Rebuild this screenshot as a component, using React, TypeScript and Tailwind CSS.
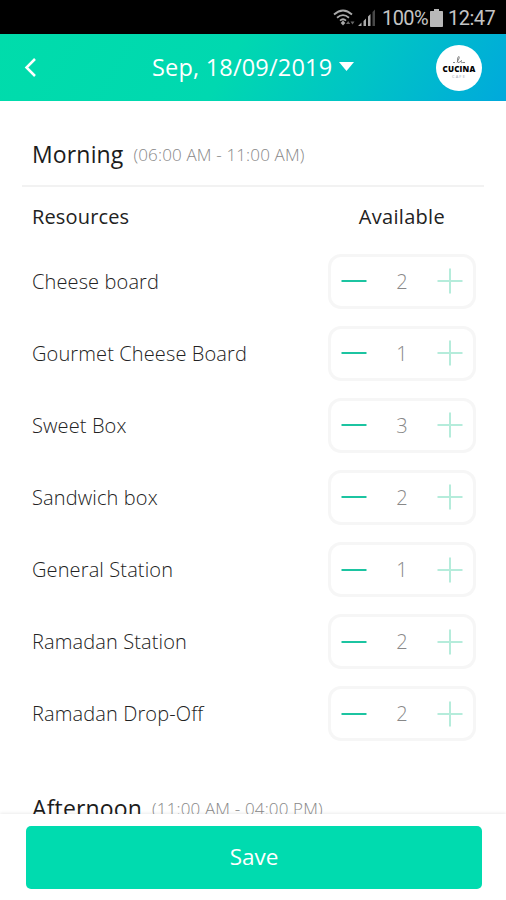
import { useState } from "react";

interface Resource {
  name: string;
  available: number;
}

const INITIAL_RESOURCES: Resource[] = [
  { name: "Cheese board", available: 2 },
  { name: "Gourmet Cheese Board", available: 1 },
  { name: "Sweet Box", available: 3 },
  { name: "Sandwich box", available: 2 },
  { name: "General Station", available: 1 },
  { name: "Ramadan Station", available: 2 },
  { name: "Ramadan Drop-Off", available: 2 },
];

function StatusBar() {
  return (
    <div className="flex h-[34px] shrink-0 items-center justify-end bg-black pr-[11px] pt-[2px] font-['Roboto',sans-serif] text-[20px] leading-none text-[#c4c4c4]">
      <svg className="mr-[3px] h-[18px] w-[22px]" viewBox="0 0 22 18" fill="none" stroke="#aaa" strokeWidth="1.8">
        <path d="M1 5.5Q10 -2.5 19 5.5" />
        <path d="M4 8.7Q10 3.5 16 8.7" />
        <path d="M7 11.6Q10 9 13 11.6" />
        <path d="M10 11.5L12.3 14L10 16.5L7.7 14Z" fill="#aaa" stroke="none" />
        <path d="M13 15L15.2 12L17.2 15ZM17.5 12.5H21.5L19.5 15.5Z" fill="#666" stroke="none" />
      </svg>
      <svg className="mr-[6px] h-[18px] w-[18px]" viewBox="0 0 18 18" fill="#aaa">
        <path d="M0 17L3.5 13.5V17ZM5.5 12L8 9.5V17H5.5ZM10 7.5L12.5 5V17H10Z" />
        <path d="M14.5 3L17 .5V17H14.5Z" fill="#484848" />
      </svg>
      <span className="w-[47px] tracking-[-0.6px]">100%</span>
      <svg className="mr-[5px] ml-px h-[18px] w-[13px]" viewBox="0 0 13 18" fill="#b8b8b8">
        <path d="M4 0H9V2H12C12.6 2 13 2.4 13 3V17C13 17.6 12.6 18 12 18H1C.4 18 0 17.6 0 17V3C0 2.4.4 2 1 2H4Z" />
      </svg>
      <span className="w-[47px] tracking-[-0.5px]">12:47</span>
    </div>
  );
}

function Header() {
  return (
    <header className="flex h-[67px] shrink-0 items-center bg-[linear-gradient(120deg,#00dcab_0%,#00d8b0_45%,#00c4c5_71%,#00a9dc_100%)] pl-[24px] pr-[24px] text-white">
      <button className="flex h-8 w-8 items-center">
        <svg className="h-[20px] w-[13px]" viewBox="0 0 13 20" fill="none" stroke="currentColor" strokeWidth="2.5">
          <path d="M11 1L2.5 9.5L11 18" />
        </svg>
      </button>
      <button className="ml-[96px] flex items-center">
        <span className="w-[187px] whitespace-nowrap text-left text-[23.5px] tracking-[0.2px]">Sep, 18/09/2019</span>
        <svg className="mb-[2px] h-[9px] w-[15px]" viewBox="0 0 15 9" fill="currentColor">
          <path d="M0 0H15L7.5 9Z" />
        </svg>
      </button>
      <div className="ml-auto flex h-[46px] w-[46px] flex-col items-center justify-center rounded-full bg-white text-black">
        <svg className="h-[9px] w-[15px]" viewBox="0 0 15 9" fill="none" stroke="#777" strokeWidth="0.9">
          <path d="M1 7.5H3M5 7.5C6 5 8 3 7 1.5C5.5 1.5 5 6 6 7.5C7 8 9 6 9.5 5.5C8.5 8 10 8 10.5 7.5H13" />
        </svg>
        <span className="text-[8px] leading-[9px] font-extrabold tracking-[0.2px]">CUCINA</span>
        <span className="text-[4px] leading-[7px] tracking-[1.2px] text-gray-400">CAFE</span>
      </div>
    </header>
  );
}

function Stepper({ value, onChange }: { value: number; onChange: (value: number) => void }) {
  return (
    <div className="flex h-[55px] w-[148px] items-center justify-between rounded-[13px] border-[3px] border-[#f6f6f6] px-[10px]">
      <button onClick={() => onChange(Math.max(0, value - 1))}>
        <svg className="h-[26px] w-[26px]" viewBox="0 0 26 26" stroke="#1cc4a1" strokeWidth="2">
          <path d="M.5 13H25.5" />
        </svg>
      </button>
      <span className="pt-px text-[20px] font-light text-[#888]">{value}</span>
      <button onClick={() => onChange(value + 1)}>
        <svg className="h-[26px] w-[26px]" viewBox="0 0 26 26" stroke="#b5ecdb" strokeWidth="2">
          <path d="M.5 13H25.5M13 .5V25.5" />
        </svg>
      </button>
    </div>
  );
}

function SectionTitle({ title, hours }: { title: string; hours: string }) {
  return (
    <div className="flex h-[30px] items-center gap-[10px] whitespace-nowrap pl-[10px]">
      <h2 className="text-[23px] leading-[30px] tracking-[0.15px] text-[#1c1c1c]">{title}</h2>
      <span className="pt-[2px] text-[17px] leading-[30px] font-light tracking-[0.15px] text-[#888]">{hours}</span>
    </div>
  );
}

export default function App() {
  const [resources, setResources] = useState(INITIAL_RESOURCES);

  const setAvailable = (index: number, available: number) => {
    setResources(resources.map((item, i) => (i === index ? { ...item, available } : item)));
  };

  return (
    <div className="flex h-[900px] w-[506px] flex-col overflow-hidden bg-white font-['Open_Sans',sans-serif]">
      <StatusBar />
      <Header />

      <main className="min-h-0 flex-1 overflow-hidden px-[22px] pt-[38px]">
        <SectionTitle title="Morning" hours="(06:00 AM - 11:00 AM)" />
        <div className="mt-[16px] h-[2px] bg-[#f2f2f2]" />

        <div className="mt-[16px] flex h-[28px] items-center justify-between pl-[10px] pr-[39px] text-[20px] tracking-[0.15px] text-[#222]">
          <span>Resources</span>
          <span className="tracking-[0.3px]">Available</span>
        </div>

        <ul className="mt-[14px] pl-[10px] pr-[8px]">
          {resources.map((item, index) => (
            <li key={item.name} className="flex h-[72.15px] items-center justify-between">
              <span className="pt-px text-[20px] font-light tracking-[0.12px] text-[#222]">{item.name}</span>
              <Stepper value={item.available} onChange={(value) => setAvailable(index, value)} />
            </li>
          ))}
        </ul>

        <div className="mt-[43px]">
          <SectionTitle title="Afternoon" hours="(11:00 AM - 04:00 PM)" />
        </div>
      </main>

      <footer className="h-[86px] shrink-0 bg-white px-[26px] pt-[12px] shadow-[0_-1px_3px_rgba(0,0,0,0.08)]">
        <button className="h-[63px] w-[456px] rounded-[5px] bg-[#00dbaf] pb-[2px] text-[22.5px] text-white">Save</button>
      </footer>
    </div>
  );
}
